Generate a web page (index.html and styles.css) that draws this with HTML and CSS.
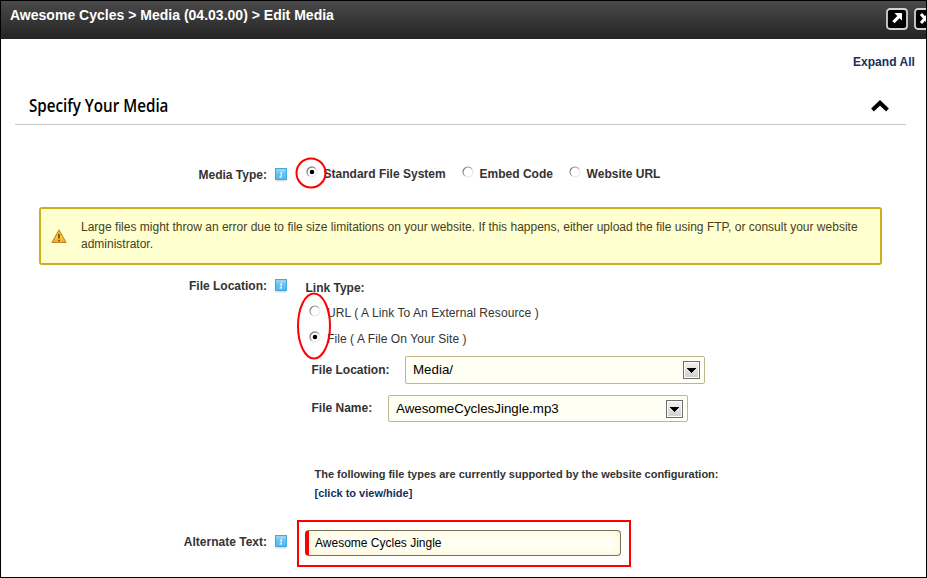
FILE: index.html
```html
<!DOCTYPE html>
<html lang="en">
<head>
<meta charset="utf-8">
<title>Edit Media</title>
<link rel="stylesheet" href="styles.css">
</head>
<body>
<svg class="defs" width="0" height="0" aria-hidden="true">
  <defs>
    <linearGradient id="blue" x1="0" y1="0" x2="0" y2="1"><stop offset="0" stop-color="#a0daf4"/><stop offset=".5" stop-color="#62c0ed"/><stop offset="1" stop-color="#54b9ee"/></linearGradient>
    <linearGradient id="amber" x1="0" y1="0" x2="0" y2="1"><stop offset="0" stop-color="#f3b53c"/><stop offset=".6" stop-color="#fccb2e"/><stop offset="1" stop-color="#f0a820"/></linearGradient>
    <linearGradient id="ring" x1="0" y1="0" x2="1" y2="1"><stop offset="0" stop-color="#666"/><stop offset=".45" stop-color="#aaa"/><stop offset=".6" stop-color="#e8e8e8"/><stop offset="1" stop-color="#eee"/></linearGradient>
    <symbol id="info" viewBox="0 0 12 14"><rect x="1" y="12" width="10" height="1.500" fill="#ddd"/><rect x=".5" y=".5" width="11" height="11" fill="url(#blue)" stroke="#45a8dc"/><path d="M6.500 3h1M5 5h1.800L5.700 8.800M4.400 9h2.600" fill="none" stroke="#fff" stroke-width="1"/></symbol>
    <symbol id="radio" viewBox="0 0 12 12"><circle cx="6" cy="6" r="5" fill="#fff" stroke="url(#ring)" stroke-width="1.200"/></symbol>
    <symbol id="radio-on" viewBox="0 0 12 12"><circle cx="6" cy="6" r="5" fill="#fff" stroke="url(#ring)" stroke-width="1.400"/><circle cx="6" cy="6" r="2.300" fill="#000"/></symbol>
  </defs>
</svg>
<div class="window">
  <header class="titlebar">
    <h1 class="title">Awesome Cycles &gt; Media (04.03.00) &gt; Edit Media</h1>
    <div class="window-buttons">
      <svg width="22" height="22" viewBox="0 0 22 22"><rect x="1" y="1" width="20" height="20" rx="3" fill="#000" stroke="#d2d2d2" stroke-width="1.800"/><path d="M8.500 5H16v7.500l-2.500-2.300-5 5-2.200-2.200 5-4.900z" fill="#fff"/></svg>
      <svg width="22" height="22" viewBox="0 0 22 22"><rect x="1" y="1" width="20" height="20" rx="3" fill="#000" stroke="#d2d2d2" stroke-width="1.800"/><path d="M7 6l8 9M15 6l-8 9" stroke="#fff" stroke-width="3"/></svg>
    </div>
  </header>
  <div class="toolbar"><a class="expand">Expand All</a></div>
  <div class="section-head">
    <h2 class="heading">Specify Your Media</h2>
    <svg class="chevron" width="18" height="12" viewBox="0 0 18 12"><path d="M1.500 10L9 2.800l7.500 7.200" fill="none" stroke="#000" stroke-width="4"/></svg>
  </div>
  <div class="row media-row">
    <span class="label">Media Type:</span><svg class="info"><use href="#info"/></svg>
    <div class="choices">
      <svg class="radio"><use href="#radio-on"/></svg><span class="c1">Standard File System</span>
      <svg class="radio"><use href="#radio"/></svg><span class="c2">Embed Code</span>
      <svg class="radio"><use href="#radio"/></svg><span class="c3">Website URL</span>
      <svg class="mark-circle" width="32" height="32"><ellipse cx="16" cy="16" rx="14.500" ry="14.500"/></svg>
    </div>
  </div>
  <div class="notice">
    <svg class="warning" width="16" height="15" viewBox="0 0 16 15"><path d="M8 1L15 13.500H1z" fill="url(#amber)" stroke="#c78628" stroke-width="1.100" stroke-linejoin="round"/><path d="M8 5v4.500M8 10.700v1.500" stroke="#59451b" stroke-width="1.600"/></svg>
    <p class="notice-text"><span class="n1">Large files might throw an error due to file size limitations on your website. If this happens, either upload the file using FTP, or consult your website</span><br><span class="n2">administrator.</span></p>
  </div>
  <div class="row location-row">
    <span class="label">File Location:</span><svg class="info"><use href="#info"/></svg>
    <div class="location">
      <div class="link-type">Link Type:</div>
      <div class="option"><svg class="radio"><use href="#radio"/></svg><span class="o1">URL ( A Link To An External Resource )</span></div>
      <div class="option"><svg class="radio"><use href="#radio-on"/></svg><span class="o2">File ( A File On Your Site )</span></div>
      <div class="field"><span class="field-label">File Location:</span><div class="select path"><span class="s1">Media/</span><i class="arrow"></i></div></div>
      <div class="field second"><span class="field-label short">File Name:</span><div class="select name"><span class="s2">AwesomeCyclesJingle.mp3</span><i class="arrow"></i></div></div>
      <div class="types"><span class="t1">The following file types are currently supported by the website configuration:</span><br><a class="t2">[click to view/hide]</a></div>
      <svg class="mark-oval" width="36" height="70"><ellipse cx="18" cy="35" rx="16" ry="32.500"/></svg>
    </div>
  </div>
  <div class="row alt-row">
    <span class="label">Alternate Text:</span><svg class="info"><use href="#info"/></svg>
    <div class="highlight"><div class="input"><span class="i1">Awesome Cycles Jingle</span></div></div>
  </div>
</div>
</body>
</html>
```
FILE: styles.css
```css
* { box-sizing: border-box; }
body { margin: 0; background: #fff; color: #333; font: bold 12px/16px "Liberation Sans", Arial, sans-serif; }
.defs { position: absolute; }
svg { display: block; flex: none; }
span, a { white-space: nowrap; }
.window { width: 927px; height: 578px; border: 1px solid #000; overflow: hidden; }
.titlebar { display: flex; justify-content: space-between; height: 38px; background: linear-gradient(#4a4a4a, #242424); overflow: hidden; }
.title { margin: 6px 0 0 9px; font-size: 14px; line-height: 17px; letter-spacing: .01px; color: #fff; white-space: nowrap; }
.window-buttons { display: flex; gap: 6px; margin: 7px -9.500px 0 0; }
.toolbar { display: flex; justify-content: flex-end; height: 46px; padding: 15px 11px 0 0; }
.expand { color: #15315c; letter-spacing: .05px; }
.section-head { display: flex; justify-content: space-between; width: 891px; height: 40px; margin-left: 14px; padding: 8px 17px 0 14px; border-bottom: 1px solid #c8c8c8; }
.heading { margin: 0; font: 600 18px/24px "Open Sans", sans-serif; color: #000; white-space: nowrap; transform: scaleX(.843); transform-origin: left; }
.chevron { margin-top: 7px; }
.row { display: flex; }
.label { width: 266px; text-align: right; }
.info { width: 12px; height: 14px; margin: 1px 0 0 8px; }
.radio { width: 12px; height: 12px; }
.media-row { height: 82px; padding-top: 42px; }
.choices { position: relative; display: flex; margin: -1px 0 0 18px; height: 16px; padding-left: 1px; }
.choices .radio { margin-top: 0; }
.c1 { width: 138px; margin-left: 6px; }
.c2 { width: 89px; margin-left: 6px; }
.c3 { margin-left: 6px; }
.c1, .c2, .c3 { text-indent: -.4px; }
.mark-circle { position: absolute; left: -10px; top: -9px; }
.mark-circle ellipse, .mark-oval ellipse { fill: none; stroke: #f00; stroke-width: 2; }
.notice { display: flex; width: 843px; height: 58px; margin-left: 38px; border: 2px solid #ccb11d; border-radius: 3px; background: #ffffcf; }
.warning { margin: 20px 0 0 10px; }
.notice-text { margin: 10px 0 0 14px; font-weight: normal; line-height: 17px; color: #473e1b; }
.n1 { letter-spacing: .007px; }
.location-row { height: 255px; padding-top: 13px; }
.location { position: relative; margin-left: 18px; padding-top: 2px; }
.link-type { height: 25px; padding-left: .5px; }
.option { display: flex; height: 26px; padding-left: 4px; font-weight: normal; }
.o1, .o2 { margin-left: 6px; letter-spacing: .08px; }
.field { display: flex; height: 28px; margin: -1px 0 0 6.500px; }
.field.second { margin-top: 11px; }
.field-label { width: 93.500px; padding-top: 6px; }
.field-label.short { width: 76.500px; padding-top: 5px; }
.select { display: flex; justify-content: space-between; width: 300px; height: 28px; padding: 4px 4px 0 7px; border: 1px solid #bdb78d; border-radius: 2px; background: #fffff3; color: #000; font-weight: normal; font-size: 13.330px; line-height: 17px; }
.select.name { height: 27px; }
.arrow { width: 17px; height: 18px; border: 1px solid #6e6e6e; background: linear-gradient(#000, #000) 3px 6px / 9px 1px no-repeat, linear-gradient(#000, #000) 4px 7px / 7px 1px no-repeat, linear-gradient(#000, #000) 5px 8px / 5px 1px no-repeat, linear-gradient(#000, #000) 6px 9px / 3px 1px no-repeat, linear-gradient(#000, #000) 7px 10px / 1px 1px no-repeat, linear-gradient(#f2f2f2, #cfcfcf); box-shadow: inset 0 0 0 1px #fff; }
.types { margin: 42px 0 0 9.500px; font-size: 11px; line-height: 19px; }
.t2 { color: #15315c; }
.mark-oval { position: absolute; left: -9px; top: 13px; }
.alt-row { height: 50px; }
.alt-row .label { padding-top: 14px; }
.alt-row .info { margin-top: 15px; }
.highlight { width: 334px; height: 47px; margin-left: 10px; padding: 8px 0 0 6px; border: 2px solid #f00; }
.input { width: 316px; height: 26px; padding: 4px 0 0 6px; border: 1px solid #77725a; border-left: 4px solid #f00; border-radius: 4px; background: #fffff3; box-shadow: inset 0 0 8px #fff0c8; color: #000; font-weight: normal; }
```
